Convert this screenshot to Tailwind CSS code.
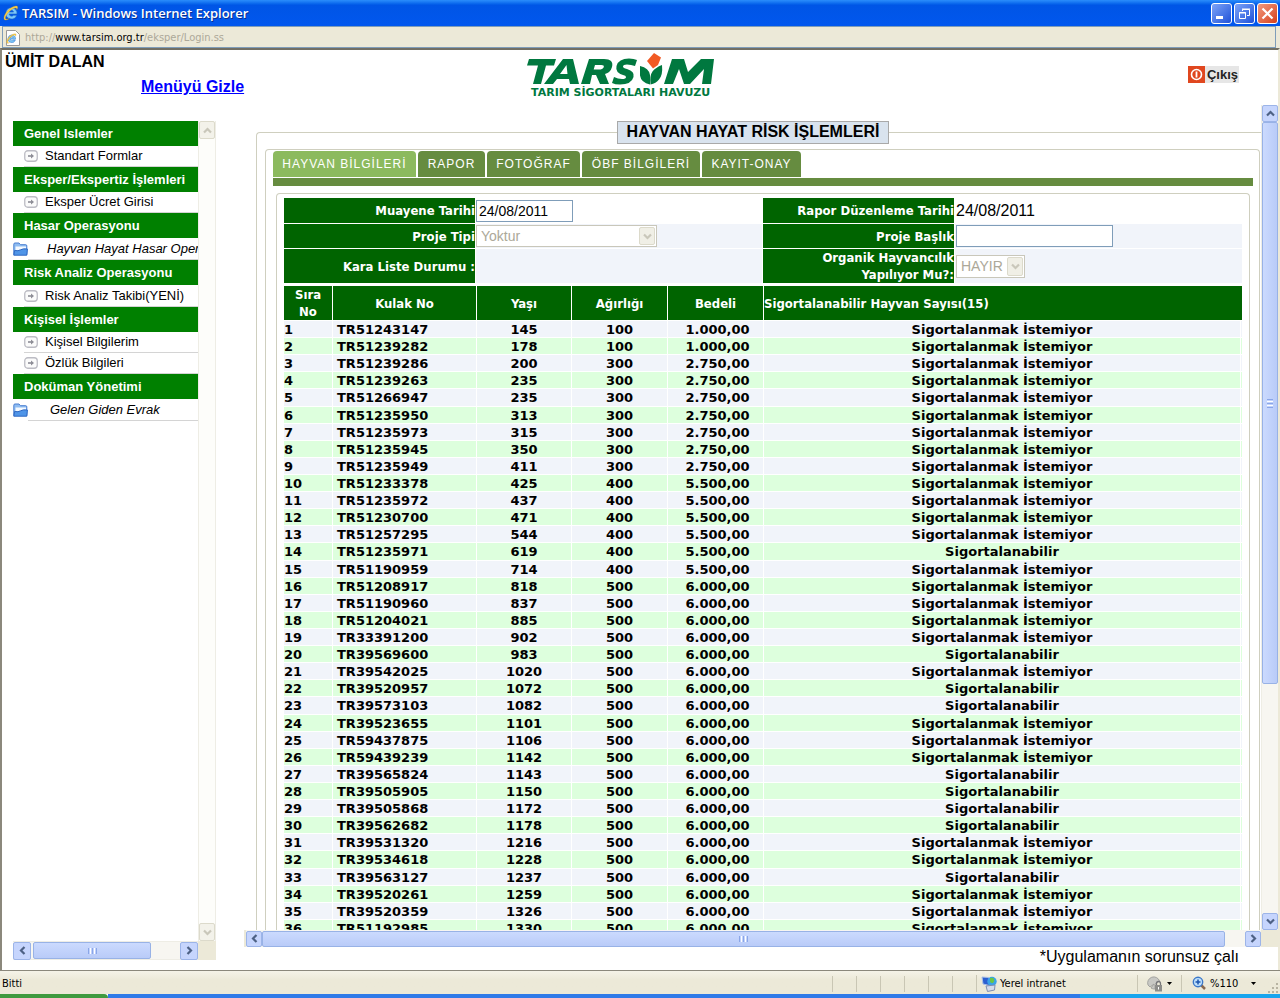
<!DOCTYPE html>
<html lang="tr">
<head>
<meta charset="utf-8">
<title>TARSIM</title>
<script src="https://cdn.jsdelivr.net/npm/@tailwindcss/browser@4"></script>
</head>
<body class="h-screen flex flex-col overflow-hidden bg-white text-black font-['Liberation_Sans',Arial,sans-serif]">

<svg class="hidden" aria-hidden="true">
  <symbol id="ie" viewBox="0 0 16 16">
    <path d="M8.300 2.800a5.600 5.600 0 1 0 5.400 7.500h-3.300a2.400 2.400 0 0 1-4.200-1.300h7.800a5.600 5.600 0 0 0-5.700-6.200zM6.200 7a2.200 2.200 0 0 1 4.300 0z" fill="#7cc8fa" stroke="#1b63c4" stroke-width=".6"/>
    <path d="M1.300 14.500C-.5 12 4 4.500 10 1.800c3-1.400 4.700-.9 4.700.5 0 .9-.4 1.700-.9 2.500.2-1.700-.9-2.400-3.300-1.300C6 5.600 1.500 12 2.600 13.800c.6.900 2.300.2 3.400-.4-1.600 1.500-3.900 2.300-4.700 1.100z" fill="#f7cf4c" stroke="#c98d12" stroke-width=".3"/>
  </symbol>
  <symbol id="go" viewBox="0 0 14 12">
    <rect x=".75" y=".75" width="12.500" height="10.500" rx="3" fill="#fbfbfb" stroke="#bcbcc4" stroke-width="1.300"/>
    <path d="M4 6h4" stroke="#8d8d96" stroke-width="1.600"/><path d="M7 3.500 10 6 7 8.500z" fill="#8d8d96"/>
  </symbol>
  <symbol id="folder" viewBox="0 0 15 14">
    <path d="M.8 12.500V2.200Q.8 1 2 1h4l1.500 1.700h5.300q1 0 1 1.200v8.600z" fill="#8fbdf2" stroke="#4a7fd0"/>
    <path d="M2.500 4.500h10.500V8H2.500z" fill="#f4f9ff"/>
    <path d="M.8 13.200 1.600 8.500q3.500.8 6-.7t6.800-.8l-.6 6.200z" fill="#4f95e8" stroke="#2f68c2"/>
  </symbol>
  <symbol id="left" viewBox="0 0 9 9"><path d="M6.500 1 3 4.500 6.500 8" fill="none" stroke="currentColor" stroke-width="2.200"/></symbol>
  <symbol id="right" viewBox="0 0 9 9"><path d="M2.500 1 6 4.500 2.500 8" fill="none" stroke="currentColor" stroke-width="2.200"/></symbol>
  <symbol id="up" viewBox="0 0 9 9"><path d="M1 6.500 4.500 3 8 6.500" fill="none" stroke="currentColor" stroke-width="2.200"/></symbol>
  <symbol id="down" viewBox="0 0 9 9"><path d="M1 2.500 4.500 6 8 2.500" fill="none" stroke="currentColor" stroke-width="2.200"/></symbol>
</svg>

<!-- Window title bar -->
<header class="h-[26px] shrink-0 flex items-center pl-[3px] pr-[2px] bg-linear-to-b from-[#2b8dfb] via-[#0055e6] via-20% to-[#0157ee]">
  <svg class="size-4 mr-[3px]"><use href="#ie"/></svg>
  <h1 class="flex-1 text-white text-[13px] leading-4 font-semibold font-['Open_Sans','Noto_Sans',sans-serif] [text-shadow:1px_1px_0_#0a2f8f]">TARSIM - Windows Internet Explorer</h1>
  <div class="flex gap-[2px]">
    <button aria-label="Simge durumuna küçült" class="size-[21px] rounded-[3px] border border-white bg-linear-to-br from-[#7ea3f7] to-[#1f4fd8] flex items-end p-[4px]"><span class="w-[7px] h-[3px] bg-white"></span></button>
    <button aria-label="Önceki boyut" class="size-[21px] rounded-[3px] border border-white bg-linear-to-br from-[#7ea3f7] to-[#1f4fd8] flex items-center justify-center">
      <svg class="size-[13px]" viewBox="0 0 13 13" fill="none" stroke="#fff"><path d="M4.500 4V2.500h7v6H9M4 2h8"/><path d="M1.500 5.500h6v6h-6zM1 6h7"/></svg>
    </button>
    <button aria-label="Kapat" class="size-[21px] rounded-[3px] border border-white bg-linear-to-br from-[#f0997d] to-[#d63c12] flex items-center justify-center">
      <svg class="size-[13px]" viewBox="0 0 13 13" fill="none" stroke="#fff" stroke-width="2.200"><path d="m1.500 1.500 10 10m0-10-10 10"/></svg>
    </button>
  </div>
</header>

<!-- Address bar -->
<div class="h-[22px] shrink-0 bg-[#ece9d8] pl-[2px] pr-1">
  <div class="h-full border border-[#7f9db9] flex items-center gap-1 pl-[2px] pt-px text-[11px] leading-4 text-[#aca899] font-['DejaVu_Sans_Condensed','DejaVu_Sans',sans-serif]">
    <svg class="size-4" viewBox="0 0 16 16"><path d="M1.500.5h9l4 4v11h-13z" fill="#fff" stroke="#9a9a9a"/><use href="#ie" x="1" y="3" width="11" height="11"/></svg>
    <span>http://<span class="text-black">www.tarsim.org.tr</span>/eksper/Login.ss</span>
  </div>
</div>

<!-- Page -->
<main class="flex-1 min-h-0 flex flex-col border-t-2 border-t-[#716f64] border-l-2 border-l-[#8b887c] border-r-2 border-r-[#ece9d8] overflow-hidden">
  <div class="h-[55px] shrink-0 grid grid-cols-[1fr_187px_1fr] pl-[3px] pr-[42px]">
    <div class="flex flex-col gap-[5px] pt-[2px] font-bold text-base leading-5">
      <p>ÜMİT DALAN</p>
      <a href="#" class="ml-[136px] text-[#0000ff] underline">Menüyü Gizle</a>
    </div>
    <svg class="mt-[3px] w-[187px] h-[45px]" viewBox="0 0 187 45" role="img" aria-label="TARSİM Tarım Sigortaları Havuzu">
      <g fill="#00783f">
        <path d="M2 6h27l-2 6.500h-8L14 31H6l5-18.500H0z"/>
        <path d="M36 6h10l6 25h-9l-1-5H30l-4 5H17zM39.500 12 33 21h7.500z" fill-rule="evenodd"/>
        <path d="M62 6h15q10 0 8 8-1.500 5.500-7 7l4 10h-9l-4-9h-4l-2 9h-9zM68 12l-1.300 4.500h5q4 0 5-2.300.8-2.200-2.500-2.200z" fill-rule="evenodd"/>
        <path d="M110 7l-2 6q-4-1.500-8-1.500-4 0-4 2 0 1.500 4 2.500 8 2.500 6.500 8Q104.500 31.500 93 31.500q-5 0-8-1.500l2-6q4 2 8 2 4 0 4-2 0-1.300-3-2-8-2.500-6.500-9Q91.500 5.500 102 5.500q5 0 8 1.500z"/>
        <path d="M113 13q9 2 10 9v9.500q-9-2-10-9zM135 12q1 10-3 14.500-3 4-8.500 5-1-9 2-13 3-4 9.500-6.500z"/>
        <path d="M145 6h12l4 13 13-13h13l-3 25h-9l2-15-14 15h-6l-5-15-6 15h-9z"/>
      </g>
      <path d="m127 0 7 4.500-3 7.500-5 3.500-6-7.500z" fill="#f15a24"/>
      <text x="4" y="43" fill="#00783f" font-family="DejaVu Sans" font-weight="bold" font-size="11">TARIM SİGORTALARI HAVUZU</text>
    </svg>
    <button class="justify-self-end mt-4 -mr-[3px] h-[17px] flex items-center bg-[#e6e6e6] pr-[1px] gap-[2px] text-[13px] leading-4 font-bold text-[#222]">
      <svg class="size-[17px]" viewBox="0 0 17 17"><path d="M0 0h17v17H0z" fill="#e0471f"/><circle cx="8.500" cy="8.500" r="5" fill="none" stroke="#fff" stroke-width="1.600"/><path d="M8.500 5.500v6" stroke="#fff" stroke-width="1.800"/></svg>
      Çıkış
    </button>
  </div>

  <div class="flex-1 min-h-0 flex">
    <!-- Menu -->
    <aside class="mt-4 mb-[10px] ml-[11px] w-[203px] shrink-0 flex flex-col">
      <div class="flex-1 min-h-0 flex">
        <nav class="flex-1 min-w-0 overflow-hidden whitespace-nowrap text-[13px] leading-4">
          <h2 class="h-[25px] pl-[11px] flex items-center bg-[#008000] text-white font-bold">Genel Islemler</h2>
          <a href="#" class="h-[21px] ml-[11px] flex items-center gap-[7px] border-b border-[#d4d4d4]"><svg class="w-[14px] h-3"><use href="#go"/></svg>Standart Formlar</a>
          <h2 class="h-[25px] pl-[11px] flex items-center bg-[#008000] text-white font-bold">Eksper/Ekspertiz İşlemleri</h2>
          <a href="#" class="h-[21px] ml-[11px] flex items-center gap-[7px] border-b border-[#d4d4d4]"><svg class="w-[14px] h-3"><use href="#go"/></svg>Eksper Ücret Girisi</a>
          <h2 class="h-[25px] pl-[11px] flex items-center bg-[#008000] text-white font-bold">Hasar Operasyonu</h2>
          <a href="#" class="h-[22px] flex items-center italic"><svg class="w-[15px] h-[14px] shrink-0"><use href="#folder"/></svg><span class="flex-1 h-[21px] pl-[19px] pt-[2px] border-b border-[#d4d4d4]">Hayvan Hayat Hasar Oper</span></a>
          <h2 class="h-[25px] pl-[11px] flex items-center bg-[#008000] text-white font-bold">Risk Analiz Operasyonu</h2>
          <a href="#" class="h-[22px] ml-[11px] flex items-center gap-[7px] border-b border-[#d4d4d4]"><svg class="w-[14px] h-3"><use href="#go"/></svg>Risk Analiz Takibi(YENİ)</a>
          <h2 class="h-[25px] pl-[11px] flex items-center bg-[#008000] text-white font-bold">Kişisel İşlemler</h2>
          <a href="#" class="h-[21px] ml-[11px] flex items-center gap-[7px] border-b border-[#d4d4d4]"><svg class="w-[14px] h-3"><use href="#go"/></svg>Kişisel Bilgilerim</a>
          <a href="#" class="h-[21px] ml-[11px] flex items-center gap-[7px] border-b border-[#d4d4d4]"><svg class="w-[14px] h-3"><use href="#go"/></svg>Özlük Bilgileri</a>
          <h2 class="h-[25px] pl-[11px] flex items-center bg-[#008000] text-white font-bold">Doküman Yönetimi</h2>
          <a href="#" class="h-[22px] flex items-center italic"><svg class="w-[15px] h-[14px] shrink-0"><use href="#folder"/></svg><span class="flex-1 h-[21px] pl-[22px] pt-[2px] border-b border-[#d4d4d4]">Gelen Giden Evrak</span></a>
        </nav>
        <div class="w-[18px] shrink-0 flex flex-col justify-between border-x border-[#eeede5] bg-[#fdfdfa] text-[#c9c7ba]">
          <button aria-label="Yukarı" class="h-[18px] rounded-[2px] border border-[#dcdacb] bg-[#f3f2ea] flex items-center justify-center"><svg class="size-[9px]"><use href="#up"/></svg></button>
          <button aria-label="Aşağı" class="h-[18px] rounded-[2px] border border-[#dcdacb] bg-[#f3f2ea] flex items-center justify-center"><svg class="size-[9px]"><use href="#down"/></svg></button>
        </div>
      </div>
      <div class="h-[19px] flex bg-[#ece9d8] text-[#4d6185]">
        <div class="flex-1 flex items-center bg-[#f7f6f1] border-y border-[#eeede5]">
          <button aria-label="Sola" class="size-[18px] rounded-[2px] border border-[#9cb4e8] bg-[#c6d5fd] flex items-center justify-center"><svg class="size-[9px]"><use href="#left"/></svg></button>
          <div class="ml-[2px] w-[118px] h-[17px] rounded-[2px] border border-[#98b2e6] bg-linear-to-b from-[#cbdafe] to-[#b9cbf8] flex items-center justify-center gap-px"><i class="w-px h-[6px] bg-[#8aa6e8]"></i><i class="w-px h-[6px] bg-white"></i><i class="w-px h-[6px] bg-[#8aa6e8]"></i><i class="w-px h-[6px] bg-white"></i><i class="w-px h-[6px] bg-[#8aa6e8]"></i></div>
          <button aria-label="Sağa" class="ml-auto size-[18px] rounded-[2px] border border-[#9cb4e8] bg-[#c6d5fd] flex items-center justify-center"><svg class="size-[9px]"><use href="#right"/></svg></button>
        </div>
        <div class="w-[18px]"></div>
      </div>
    </aside>

    <!-- Work area -->
    <div class="flex-1 min-w-0 ml-7 flex flex-col">
      <div class="flex-1 min-h-0 flex">
        <section class="flex-1 min-w-0 overflow-hidden pl-[12px] pt-4">
          <fieldset class="min-w-0 rounded-tl-[4px] border-t border-l border-[#cfcfbf] pr-3 pb-6">
            <legend class="mx-auto h-[23px] w-[272px] text-center border border-[#a9a9a9] bg-[#d9e3ee] font-bold text-base leading-5">HAYVAN HAYAT RİSK İŞLEMLERİ</legend>
            <div class="mt-[5px] ml-2 -mr-[11px] rounded-t-[4px] border-x border-t border-[#cfcfbf] pt-[1px] pb-6">
              <div class="pl-[7px] flex gap-[2px] text-white text-[12px] leading-[26px] tracking-[1px]">
                <button class="h-[26px] w-[143px] rounded-t-[4px] bg-[#8cba5e]">HAYVAN BİLGİLERİ</button>
                <button class="h-[26px] w-[67px] rounded-t-[4px] bg-[#668c40]">RAPOR</button>
                <button class="h-[26px] w-[93px] rounded-t-[4px] bg-[#668c40]">FOTOĞRAF</button>
                <button class="h-[26px] w-[118px] rounded-t-[4px] bg-[#668c40]">ÖBF BİLGİLERİ</button>
                <button class="h-[26px] w-[99px] rounded-t-[4px] bg-[#668c40]">KAYIT-ONAY</button>
              </div>
              <div class="mt-px ml-[7px] mr-[6px] h-2 bg-[#668c40]"></div>
              <div class="mt-[7px] ml-[10px] mr-[9px] rounded-t-[4px] border-x border-t border-[#cfcfbf] pt-1 pl-[7px] pr-[7px] pb-6">

                <form class="grid grid-cols-[191px_286px_191px_1fr] grid-rows-[25px_24px_34px] gap-px text-base" onsubmit="return false">
                  <label for="muayene" class="bg-[#006400] flex items-center justify-end text-right text-white font-bold text-[13px] leading-[17px] font-['DejaVu_Sans_Condensed','DejaVu_Sans',sans-serif]">Muayene Tarihi</label>
                  <div class="flex items-center"><input id="muayene" value="24/08/2011" class="w-[97px] h-[22px] border border-[#7f9db9] bg-white px-[2px] text-[14px]"></div>
                  <span class="bg-[#006400] flex items-center justify-end text-right text-white font-bold text-[13px] leading-[17px] font-['DejaVu_Sans_Condensed','DejaVu_Sans',sans-serif]">Rapor Düzenleme Tarihi</span>
                  <div class="flex items-center pl-px">24/08/2011</div>

                  <label for="proje" class="bg-[#006400] flex items-center justify-end text-right text-white font-bold text-[13px] leading-[17px] font-['DejaVu_Sans_Condensed','DejaVu_Sans',sans-serif]">Proje Tipi</label>
                  <div class="bg-[#f1f4fa] flex items-center"><div class="relative"><select id="proje" disabled class="block appearance-none w-[181px] h-[22px] border border-[#c9c7ba] bg-white px-1 text-[14px] leading-5 text-[#aca899] opacity-100"><option>Yoktur</option></select><span class="pointer-events-none absolute right-[2px] top-[2px] w-4 h-[18px] rounded-[2px] border border-[#dcdacb] bg-[#f0efe6] text-[#c9c7ba] flex items-center justify-center"><svg class="size-[9px]"><use href="#down"/></svg></span></div></div>
                  <label for="baslik" class="bg-[#006400] flex items-center justify-end text-right text-white font-bold text-[13px] leading-[17px] font-['DejaVu_Sans_Condensed','DejaVu_Sans',sans-serif]">Proje Başlık</label>
                  <div class="bg-[#f1f4fa] flex items-center pl-px"><input id="baslik" class="w-[157px] h-[22px] border border-[#7f9db9] bg-white px-[2px] text-[14px]"></div>

                  <span class="bg-[#006400] flex items-center justify-end text-right text-white font-bold text-[13px] leading-[17px] font-['DejaVu_Sans_Condensed','DejaVu_Sans',sans-serif]">Kara Liste Durumu :</span>
                  <div class="bg-[#f1f4fa]"></div>
                  <label for="organik" class="bg-[#006400] flex items-center justify-end text-right text-white font-bold text-[13px] leading-[17px] font-['DejaVu_Sans_Condensed','DejaVu_Sans',sans-serif]">Organik Hayvancılık<br>Yapılıyor Mu?:</label>
                  <div class="bg-[#f1f4fa] flex items-center pl-px"><div class="relative"><select id="organik" disabled class="block appearance-none w-[69px] h-[23px] border border-[#c9c7ba] bg-white px-1 text-[14px] leading-5 text-[#aca899] opacity-100"><option>HAYIR</option></select><span class="pointer-events-none absolute right-[2px] top-[2px] w-4 h-[19px] rounded-[2px] border border-[#dcdacb] bg-[#f0efe6] text-[#c9c7ba] flex items-center justify-center"><svg class="size-[9px]"><use href="#down"/></svg></span></div></div>
                </form>

                <table class="mt-[2px] -mx-px w-[calc(100%+2px)] h-[652px] table-fixed border-separate border-spacing-x-px border-spacing-y-px text-[13px] font-bold font-['DejaVu_Sans','Verdana',sans-serif]">
                  <colgroup><col class="w-[48px]"><col class="w-[143px]"><col class="w-[94px]"><col class="w-[95px]"><col class="w-[95px]"><col><col class="w-px"></colgroup>
                  <thead class="text-white leading-[17px] font-['DejaVu_Sans_Condensed','DejaVu_Sans',sans-serif]">
                    <tr class="h-[34px] bg-[#006400]">
                      <th class="p-0">Sıra<br>No</th><th class="p-0">Kulak No</th><th class="p-0">Yaşı</th><th class="p-0">Ağırlığı</th><th class="p-0">Bedeli</th><th colspan="2" class="p-0 text-left">Sigortalanabilir Hayvan Sayısı(15)</th>
                    </tr>
                  </thead>
                  <tbody id="rows" class="leading-[15px]"></tbody>
                </table>
              </div>
            </div>
          </fieldset>
        </section>
        <div class="w-[17px] shrink-0 flex flex-col items-center border-l border-[#eeede5] bg-[#f7f6f1] text-[#4d6185]">
          <button aria-label="Yukarı" class="w-4 h-[17px] rounded-[2px] border border-[#9cb4e8] bg-[#c6d5fd] flex items-center justify-center"><svg class="size-[9px]"><use href="#up"/></svg></button>
          <div class="w-4 h-[562px] rounded-[2px] border border-[#98b2e6] bg-linear-to-r from-[#cbdafe] to-[#b9cbf8] flex flex-col items-center justify-center gap-px"><i class="h-px w-[6px] bg-[#8aa6e8]"></i><i class="h-px w-[6px] bg-white"></i><i class="h-px w-[6px] bg-[#8aa6e8]"></i><i class="h-px w-[6px] bg-white"></i><i class="h-px w-[6px] bg-[#8aa6e8]"></i></div>
          <button aria-label="Aşağı" class="mt-auto w-4 h-[17px] rounded-[2px] border border-[#9cb4e8] bg-[#c6d5fd] flex items-center justify-center"><svg class="size-[9px]"><use href="#down"/></svg></button>
        </div>
      </div>
      <div class="h-[17px] shrink-0 flex bg-[#ece9d8] text-[#4d6185]">
        <div class="flex-1 flex items-center bg-[#f7f6f1] ml-[2px]">
          <button aria-label="Sola" class="w-[16px] h-4 rounded-[2px] border border-[#9cb4e8] bg-[#c6d5fd] flex items-center justify-center"><svg class="size-[9px]"><use href="#left"/></svg></button>
          <div class="flex-1 mr-[20px] h-4 rounded-[2px] border border-[#98b2e6] bg-linear-to-b from-[#cbdafe] to-[#b9cbf8] flex items-center justify-center gap-px"><i class="w-px h-[6px] bg-[#8aa6e8]"></i><i class="w-px h-[6px] bg-white"></i><i class="w-px h-[6px] bg-[#8aa6e8]"></i><i class="w-px h-[6px] bg-white"></i><i class="w-px h-[6px] bg-[#8aa6e8]"></i></div>
          <button aria-label="Sağa" class="w-[16px] h-4 rounded-[2px] border border-[#9cb4e8] bg-[#c6d5fd] flex items-center justify-center"><svg class="size-[9px]"><use href="#right"/></svg></button>
        </div>
        <div class="w-[17px]"></div>
      </div>
      <div class="h-[23px] shrink-0 flex justify-end pr-[39px]">
        <p class="whitespace-nowrap text-base leading-5">*Uygulamanın sorunsuz çalı</p>
      </div>
    </div>
  </div>
</main>

<!-- Status bar -->
<footer class="h-[24px] shrink-0 flex items-center pt-[2px] border-t border-[#8b887c] bg-linear-to-b from-[#f5f3e8] to-[#ece9d8] to-40% text-[11px] leading-4 font-['DejaVu_Sans_Condensed','DejaVu_Sans',sans-serif]">
  <span class="pl-[2px] flex-1">Bitti</span>
  <div class="flex h-4">
    <i class="w-6 border-l border-[#c9c6b4]"></i><i class="w-6 border-l border-[#c9c6b4]"></i><i class="w-6 border-l border-[#c9c6b4]"></i><i class="w-6 border-l border-[#c9c6b4]"></i><i class="w-6 border-l border-[#c9c6b4]"></i><i class="w-6 border-l border-[#c9c6b4]"></i>
  </div>
  <div class="w-[161px] flex items-center gap-[3px] border-l border-[#c9c6b4] pl-1 h-[17px]">
    <svg class="size-4" viewBox="0 0 16 16"><path d="m1 1 7 .5.500 8L2 8z" fill="#2c5fd0" stroke="#a9bfe6"/><circle cx="11" cy="5.500" r="4.700" fill="#3ba3e8"/><path d="M9 2q3-1 4 1t-1 4q-3 0-3-2z" fill="#6cc644"/><path d="m5 10 9-1-.5 5-7 1.500z" fill="#d6dceb" stroke="#7e8db0"/></svg>
    Yerel intranet
  </div>
  <button aria-label="Güvenlik" class="w-[44px] h-[17px] flex items-center gap-1 border-l border-[#c9c6b4] pl-[9px]">
    <svg class="size-4" viewBox="0 0 16 16"><path d="M1 9a6 6 0 0 1 11.500-4L8 8v5a6 6 0 0 1-4-1l3-4-4 3z" fill="#c8c8c4" stroke="#a3a3a0"/><path d="M8 9h7v6.500H8z" fill="#8d8d8a"/><path d="M9.500 9V7.500a2 2 0 0 1 4 0V9" fill="none" stroke="#77777a" stroke-width="1.300"/><path d="M11.500 11v2.500" stroke="#fff"/></svg>
    <svg class="w-[5px] h-[3px]" viewBox="0 0 5 3"><path d="M0 0h5L2.500 3z"/></svg>
  </button>
  <button class="w-[87px] h-[17px] flex items-center gap-[2px] border-l border-[#c9c6b4] pl-[10px]">
    <svg class="size-4" viewBox="0 0 16 16"><path d="m8 8 5 5" stroke="#8a6a50" stroke-width="2.500"/><circle cx="6" cy="6" r="4.700" fill="#bfe0fb" stroke="#3c78c8" stroke-width="1.400"/><path d="M3.500 6h5M6 3.500v5" stroke="#1d56b0" stroke-width="1.500"/></svg>
    %110
    <svg class="ml-[11px] w-[5px] h-[3px]" viewBox="0 0 5 3"><path d="M0 0h5L2.500 3z"/></svg>
  </button>
  <svg class="w-3 h-3 self-end" viewBox="0 0 12 12" fill="#b8b4a2"><path d="M8 1h2v2H8zM4 5h2v2H4zM8 5h2v2H8zM0 9h2v2H0zM4 9h2v2H4zM8 9h2v2H8z"/></svg>
</footer>
<div class="h-[4px] shrink-0 flex">
  <div class="w-[108px] rounded-tr-[4px] bg-[#3f9a3f]"></div>
  <div class="flex-1 bg-[#2f7ae8]"></div>
  <div class="w-[200px] bg-[#18a5ee]"></div>
</div>

<script>
  const notWanted = 'Sigortalanmak İstemiyor', insurable = 'Sigortalanabilir';
  const animals = [
    ['TR51243147', 145, 100, '1.000,00', 0], ['TR51239282', 178, 100, '1.000,00', 0],
    ['TR51239286', 200, 300, '2.750,00', 0], ['TR51239263', 235, 300, '2.750,00', 0],
    ['TR51266947', 235, 300, '2.750,00', 0], ['TR51235950', 313, 300, '2.750,00', 0],
    ['TR51235973', 315, 300, '2.750,00', 0], ['TR51235945', 350, 300, '2.750,00', 0],
    ['TR51235949', 411, 300, '2.750,00', 0], ['TR51233378', 425, 400, '5.500,00', 0],
    ['TR51235972', 437, 400, '5.500,00', 0], ['TR51230700', 471, 400, '5.500,00', 0],
    ['TR51257295', 544, 400, '5.500,00', 0], ['TR51235971', 619, 400, '5.500,00', 1],
    ['TR51190959', 714, 400, '5.500,00', 0], ['TR51208917', 818, 500, '6.000,00', 0],
    ['TR51190960', 837, 500, '6.000,00', 0], ['TR51204021', 885, 500, '6.000,00', 0],
    ['TR33391200', 902, 500, '6.000,00', 0], ['TR39569600', 983, 500, '6.000,00', 1],
    ['TR39542025', 1020, 500, '6.000,00', 0], ['TR39520957', 1072, 500, '6.000,00', 1],
    ['TR39573103', 1082, 500, '6.000,00', 1], ['TR39523655', 1101, 500, '6.000,00', 0],
    ['TR59437875', 1106, 500, '6.000,00', 0], ['TR59439239', 1142, 500, '6.000,00', 0],
    ['TR39565824', 1143, 500, '6.000,00', 1], ['TR39505905', 1150, 500, '6.000,00', 1],
    ['TR39505868', 1172, 500, '6.000,00', 1], ['TR39562682', 1178, 500, '6.000,00', 1],
    ['TR39531320', 1216, 500, '6.000,00', 0], ['TR39534618', 1228, 500, '6.000,00', 0],
    ['TR39563127', 1237, 500, '6.000,00', 1], ['TR39520261', 1259, 500, '6.000,00', 0],
    ['TR39520359', 1326, 500, '6.000,00', 0], ['TR51192985', 1330, 500, '6.000,00', 0]
  ];
  document.getElementById('rows').innerHTML = animals.map((a, i) =>
    `<tr class="h-4 odd:bg-[#f1f4fa] even:bg-[#ddffdd] text-center">
      <td class="p-0 pt-px text-left">${i + 1}</td><td class="p-0 pt-px pl-1 text-left">${a[0]}</td>
      <td class="p-0 pt-px">${a[1]}</td><td class="p-0 pt-px">${a[2]}</td><td class="p-0 pt-px pl-1">${a[3]}</td>
      <td class="p-0 pt-px">${a[4] ? insurable : notWanted}</td><td class="p-0"></td></tr>`).join('');
</script>
</body>
</html>
